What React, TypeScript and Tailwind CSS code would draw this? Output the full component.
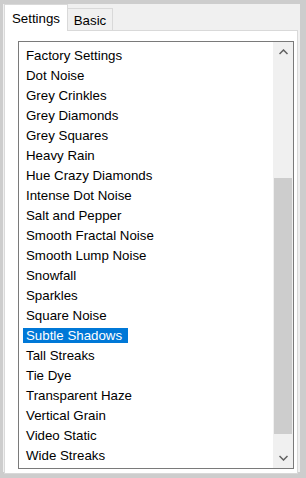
import React from "react";

const items = [
  "Factory Settings",
  "Dot Noise",
  "Grey Crinkles",
  "Grey Diamonds",
  "Grey Squares",
  "Heavy Rain",
  "Hue Crazy Diamonds",
  "Intense Dot Noise",
  "Salt and Pepper",
  "Smooth Fractal Noise",
  "Smooth Lump Noise",
  "Snowfall",
  "Sparkles",
  "Square Noise",
  "Subtle Shadows",
  "Tall Streaks",
  "Tie Dye",
  "Transparent Haze",
  "Vertical Grain",
  "Video Static",
  "Wide Streaks",
];

export default function App() {
  return (
    <div
      className="w-[306px] h-[478px] bg-[#cdcdcd] pt-[4px] pl-[3px] pr-[6px] pb-[6px] text-black"
      style={{ fontFamily: '"Liberation Sans", Arial, sans-serif' }}
    >
      <div className="h-full bg-[#f0f0f0] flex flex-col">
        <div className="h-[26px] flex items-end pl-[1px] relative z-10">
          <div className="h-[27px] w-[64px] bg-white border border-b-0 border-[#d9d9d9] text-[13.3px] leading-none flex items-start justify-center pt-[7px] -mb-[1px]">
            Settings
          </div>
          <div className="h-[22px] w-[45px] bg-[#f0f0f0] border border-l-0 border-b-0 border-[#d9d9d9] text-[13.3px] leading-none flex items-start justify-center pt-[5px]">
            Basic
          </div>
        </div>
        <div className="flex-1 ml-[1px] mr-[2px] border border-[#d9d9d9] bg-white pt-[10px] pl-[13px] pr-[3px] pb-[4px] flex">
          <div className="flex-1 border border-[#7a7a7a] flex">
            <div className="flex-1 pt-[6px] pl-[4px] overflow-hidden">
              {items.map((it) => (
                <div key={it} className="h-[20px] flex items-start">
                  <span
                    className={
                      "h-[15px] text-[13.3px] leading-[15px] pl-[3px] pr-[6px] whitespace-nowrap " +
                      (it === "Subtle Shadows" ? "bg-[#0078d7] text-white" : "")
                    }
                  >
                    {it}
                  </span>
                </div>
              ))}
            </div>
            <div className="w-[20px] bg-[#f0f0f0] flex flex-col">
              <div className="h-[20px] flex items-center justify-center">
                <svg width="9" height="6" viewBox="0 0 9 6">
                  <path d="M0.5 5 L4.5 1 L8.5 5" stroke="#606060" strokeWidth="1.5" fill="none" />
                </svg>
              </div>
              <div className="flex-1 pt-[116px] pb-[14px]">
                <div className="h-full bg-[#cdcdcd] mx-[1px]" />
              </div>
              <div className="h-[20px] flex items-center justify-center">
                <svg width="9" height="6" viewBox="0 0 9 6">
                  <path d="M0.5 1 L4.5 5 L8.5 1" stroke="#606060" strokeWidth="1.5" fill="none" />
                </svg>
              </div>
            </div>
          </div>
        </div>
      </div>
    </div>
  );
}
